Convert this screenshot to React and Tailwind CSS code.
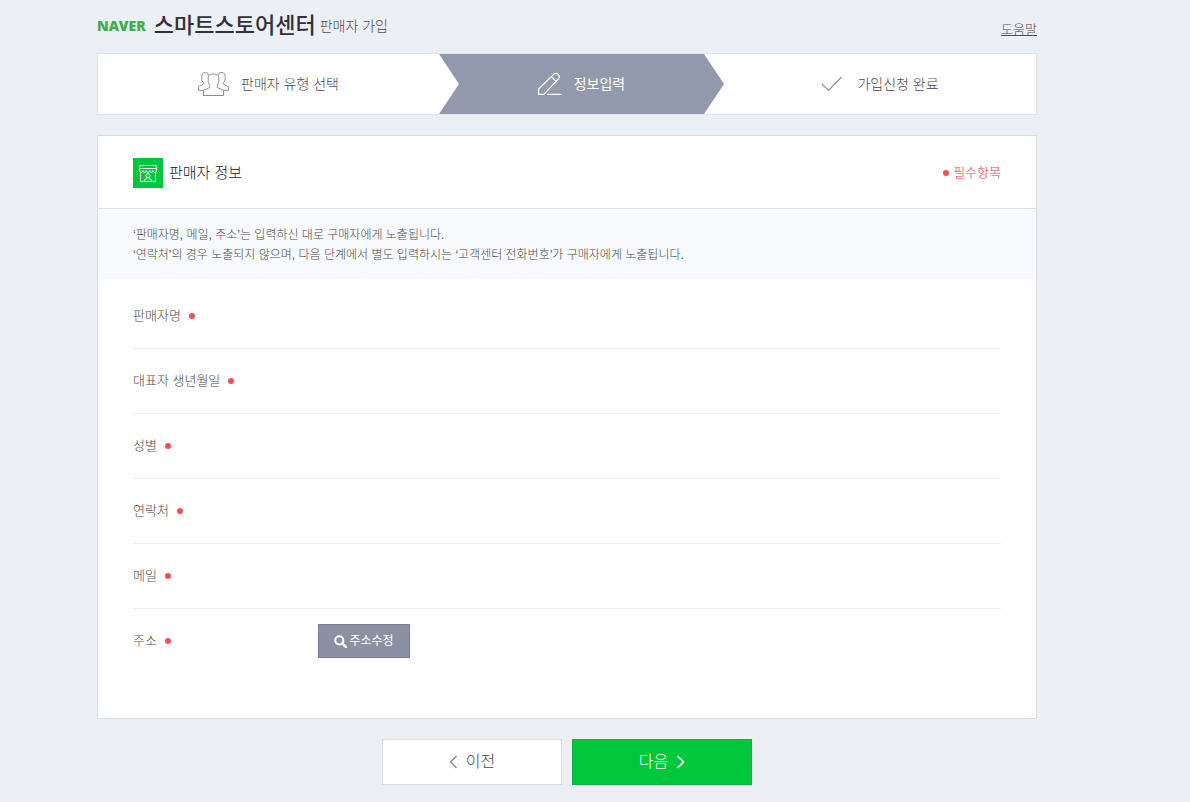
import React from "react";

function UsersIcon() {
  return (
    <svg width="31" height="26" viewBox="0 0 31 26" fill="none" stroke="#8b8e98" strokeWidth="1" aria-hidden="true">
      <path d="M5.5 24.5V19.3L11.8 16.5V14.2C10.6 12.8 10.2 11.2 10.2 9V6.8C10.2 4 12 3 15.5 3S20.8 4 20.8 6.8V9C20.8 11.2 20.4 12.8 19.2 14.2V16.5L25.5 19.3V24.5Z" />
      <path d="M10.2 4.2C10.4 2.2 9.4 1.5 7.6 1.5C4.6 1.5 3.8 3 3.8 5.6V7.4C3.8 9.4 4.4 10.6 5.4 11.6V13.2L.5 15.8V19.3H5.5" />
      <path d="M20.8 4.2C20.6 2.2 21.6 1.5 23.4 1.5C26.4 1.5 27.2 3 27.2 5.6V7.4C27.2 9.4 26.6 10.6 25.6 11.6V13.2L30.5 15.8V19.3H25.5" />
    </svg>
  );
}

function PencilIcon() {
  return (
    <svg width="24" height="24" viewBox="0 0 24 24" fill="none" stroke="#ffffff" strokeWidth="1.2" aria-hidden="true">
      <path d="M.6 22.4V17L15.4 2.6C17 1.2 18.9 1.2 20.2 2.5C21.7 4 21.6 5.8 20.3 7.2L5.8 22.4Z" />
      <path d="M13.4 4.8L18.2 9.4" />
      <path d="M9 22.4H23.5" />
    </svg>
  );
}

function CheckIcon() {
  return (
    <svg width="22" height="16" viewBox="0 0 22 16" fill="none" stroke="#8b8e94" strokeWidth="1.1" aria-hidden="true">
      <path d="M1 8L7.5 14.5L20.5 1" />
    </svg>
  );
}

function StoreIcon() {
  return (
    <svg width="30" height="30" viewBox="0 0 30 30" fill="none" stroke="#ffffff" strokeWidth="1" className="bg-[#00c73c]" aria-hidden="true">
      <path d="M6.5 7.5H23.5V12.5C23.5 15 20.1 15 20.1 12.5C20.1 15 16.7 15 16.7 12.5C16.7 15 13.3 15 13.3 12.5C13.3 15 9.9 15 9.9 12.5C9.9 15 6.5 15 6.5 12.5Z" />
      <path d="M6.5 10.5H23.5" />
      <path d="M7.5 14.5V23.5H22.5V14.5" />
      <circle cx="15" cy="17.6" r="2" />
      <path d="M10.8 23.5L11.8 21.6L14 20.6V19.4M19.2 23.5L18.2 21.6L16 20.6V19.4" />
    </svg>
  );
}

function SearchIcon() {
  return (
    <svg width="13" height="13" viewBox="0 0 13 13" fill="none" stroke="#ffffff" aria-hidden="true">
      <circle cx="5.3" cy="5.3" r="4.1" strokeWidth="2" />
      <path d="M8.3 8.3L11.8 11.8" strokeWidth="2.4" strokeLinecap="round" />
    </svg>
  );
}

function Chevron({ d, className }) {
  return (
    <svg width="9" height="14" viewBox="0 0 9 14" fill="none" stroke="currentColor" strokeWidth="1.6" className={className} aria-hidden="true">
      <path d={d} />
    </svg>
  );
}

function Dot() {
  return <span className="size-1.5 shrink-0 rounded-full bg-[#f0505a]" />;
}

const fields = ["판매자명", "대표자 생년월일", "성별", "연락처", "메일", "주소"];

export default function App() {
  return (
    <div className="min-h-screen bg-[#eceff4] px-4 pb-4 font-['Liberation_Sans','Noto_Sans_CJK_KR',sans-serif] font-light text-[#4c4c4c] lg:pr-[72px]">
      <div className="mx-auto max-w-[940px]">
        <header className="flex h-[53px] items-start justify-between">
          <h1 className="flex items-center pt-2.5 text-[14px] leading-8">
            <span className="font-['Open_Sans',sans-serif] font-extrabold text-[#3eaf49]">NAVER</span>
            <span className="ml-2 text-[22px] font-medium text-[#303238]">스마트스토어센터</span>
            <span className="ml-1 font-light">판매자 가입</span>
          </h1>
          <a href="#help" className="pt-5 text-[13px] leading-5 underline">도움말</a>
        </header>

        <ol className="grid h-[62px] grid-cols-[341fr_285fr_312fr] border border-[#e1e4ea] bg-white text-[14px] leading-5">
          <li className="flex items-center justify-center gap-3">
            <UsersIcon />
            판매자 유형 선택
          </li>
          <li aria-current="step" className="flex items-center justify-center gap-3 bg-[#9299ab] font-normal text-white [clip-path:polygon(0_0,calc(100%_-_20px)_0,100%_50%,calc(100%_-_20px)_100%,0_100%,20px_50%)]">
            <PencilIcon />
            정보입력
          </li>
          <li className="flex items-center justify-center gap-3.5">
            <CheckIcon />
            가입신청 완료
          </li>
        </ol>

        <main className="mt-5 border border-[#d9dbe2] bg-white pb-[45px]">
          <div className="flex h-[73px] items-center justify-between border-b border-[#dde0e6] px-[35px] pt-0.5">
            <h2 className="flex items-center gap-1.5 text-[15px] leading-5 text-[#202028]">
              <StoreIcon />
              판매자 정보
            </h2>
            <p className="flex items-center gap-1 text-[13px] leading-5 text-[#ee3846]">
              <Dot />
              필수항목
            </p>
          </div>
          <div className="mb-[5px] bg-[#f7f9fd] px-[35px] pt-4 pb-3.5 text-[12px] leading-5">
            <p>‘판매자명, 메일, 주소’는 입력하신 대로 구매자에게 노출됩니다.</p>
            <p>‘연락처’의 경우 노출되지 않으며, 다음 단계에서 별도 입력하시는 ‘고객센터 전화번호’가 구매자에게 노출됩니다.</p>
          </div>
          <dl className="px-[35px] text-[13px] leading-5">
            {fields.map((name) => (
              <div key={name} className="flex h-[65px] items-center border-b border-[#eeeeef] last:h-16 last:border-0">
                <dt className="flex w-[185px] shrink-0 items-center gap-2">
                  {name}
                  <Dot />
                </dt>
                <dd>
                  {name === "주소" && (
                    <button type="button" className="flex h-[34px] w-[92px] items-center justify-center gap-0.5 border border-[#767d8f] bg-[#8b91a3] text-[12px] font-normal text-white">
                      <SearchIcon />
                      주소수정
                    </button>
                  )}
                </dd>
              </div>
            ))}
          </dl>
        </main>

        <div className="mt-5 flex justify-center gap-2.5 text-[16px] leading-6">
          <button type="button" className="flex h-[46px] w-[180px] items-center justify-center gap-2 border border-[#dcdde3] bg-white">
            <Chevron d="M7.5 1L1.5 7L7.5 13" className="text-[#8b8e98]" />
            이전
          </button>
          <button type="button" className="flex h-[46px] w-[180px] items-center justify-center gap-2 border border-[#17ad45] bg-[#00c73c] text-white">
            다음
            <Chevron d="M1.5 1L7.5 7L1.5 13" />
          </button>
        </div>
      </div>
    </div>
  );
}
